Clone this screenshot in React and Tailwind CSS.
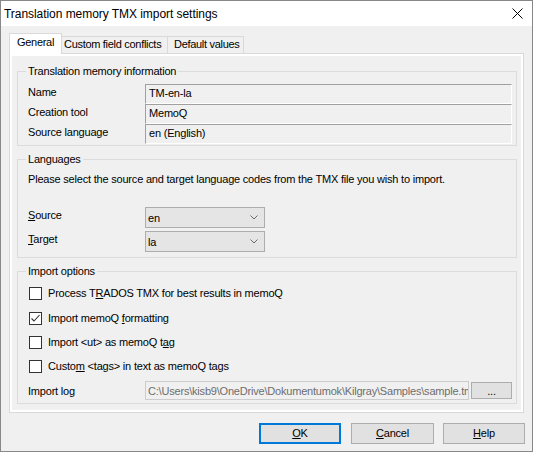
import { useState } from "react";

const font = "font-['Liberation_Sans',Arial,sans-serif]";

const GroupBox = ({ title, className = "", children }) => (
  <fieldset className={`border border-[#dcdcdc] ml-[5px] w-[500px] min-w-0 ${className}`}>
    <legend className="ml-[8px] px-[2px] leading-[13px]">{title}</legend>
    {children}
  </fieldset>
);

const InfoRow = ({ label, value }) => (
  <div className="flex items-start h-[20px]">
    <div className="w-[127px] pl-[10px] leading-[13px] pt-[2px]">{label}</div>
    <div className="w-[367px] h-[20px] border-t border-l border-[#a0a0a0] border-r-white border-b-white border-r border-b pl-[3px] pt-[2px] leading-[13px]">
      {value}
    </div>
  </div>
);

const Combo = ({ value }) => (
  <div className="w-[120px] h-[21px] border border-[#adadad] bg-[#e5e5e5] flex items-center justify-between pl-[2px] pr-[6px]">
    <span className="leading-[13px] pt-[2px]">{value}</span>
    <svg width="8" height="5" viewBox="0 0 8 5">
      <path d="M0.5 0.5 L4 4 L7.5 0.5" fill="none" stroke="#6a6a6a" strokeWidth="1" />
    </svg>
  </div>
);

const Check = ({ checked, onToggle, children }) => (
  <div className="flex items-center h-[13px] cursor-default" onClick={onToggle}>
    <div className="ml-[11px] w-[13px] h-[13px] border border-[#333] bg-white flex items-center justify-center">
      {checked && (
        <svg width="11" height="11" viewBox="0 0 11 11">
          <path d="M1.5 5.5 L4 8 L9.5 2" fill="none" stroke="#333" strokeWidth="1.1" />
        </svg>
      )}
    </div>
    <span className="ml-[6px] leading-[13px]">{children}</span>
  </div>
);

const Btn = ({ children, primary, className = "" }) => (
  <button
    className={`h-[21px] bg-[#e1e1e1] leading-[13px] ${
      primary ? "border-2 border-[#0078d7]" : "border border-[#adadad]"
    } ${className}`}
  >
    {children}
  </button>
);

export default function App() {
  const [opts, setOpts] = useState([false, true, false, false]);
  const toggle = (i) => setOpts(opts.map((v, j) => (j === i ? !v : v)));

  return (
    <div className={`w-[533px] h-[452px] border border-[#888888] bg-[#f0f0f0] flex flex-col text-[11px] tracking-[-0.2px] text-black ${font}`}>
      {/* title bar */}
      <div className="h-[25px] bg-white flex items-center justify-between pl-[3px] pr-[9px]">
        <span className="text-[12px] tracking-[-0.05px]">Translation memory TMX import settings</span>
        <svg width="11" height="11" viewBox="0 0 11 11">
          <path d="M0.5 0.5 L10.5 10.5 M10.5 0.5 L0.5 10.5" stroke="#000" strokeWidth="1" />
        </svg>
      </div>

      <div className="pl-[8px] pt-[8px]">
        {/* tabs */}
        <div className="flex items-end h-[19px] tracking-[-0.3px]">
          <div className="relative z-10 -mb-[1px] w-[53px] h-[21px] bg-white border-t border-l border-r border-[#d9d9d9] pl-[7px] pt-[2px] leading-[13px]">
            General
          </div>
          <div className="w-[106px] h-[17px] border-t border-r border-[#d9d9d9] pl-[2px] pt-[1px] leading-[13px]">
            Custom field conflicts
          </div>
          <div className="w-[76px] h-[17px] border-t border-r border-[#d9d9d9] pl-[6px] pt-[1px] leading-[13px]">
            Default values
          </div>
        </div>

        {/* tab page */}
        <div className="w-[515px] h-[360px] border border-[#d9d9d9] bg-white p-[2px]">
          <div className="h-full bg-[#f0f0f0] pt-[9px]">
            <GroupBox title="Translation memory information" className="pb-[1px]">
              <div className="mt-[6px]">
                <InfoRow label="Name" value="TM-en-la" />
                <InfoRow label="Creation tool" value="MemoQ" />
                <InfoRow label="Source language" value="en (English)" />
              </div>
            </GroupBox>

            <GroupBox title="Languages" className="mt-[7px] pb-[5px]">
              <div className="mt-[7px] pl-[10px] leading-[13px]">
                Please select the source and target language codes from the TMX file you wish to import.
              </div>
              <div className="mt-[21px] flex flex-col gap-[3px]">
                <div className="flex items-start">
                  <div className="w-[127px] pl-[10px] pt-[2px] leading-[13px]">
                    <span className="underline">S</span>ource
                  </div>
                  <Combo value="en" />
                </div>
                <div className="flex items-start">
                  <div className="w-[127px] pl-[10px] pt-[2px] leading-[13px]">
                    <span className="underline">T</span>arget
                  </div>
                  <Combo value="la" />
                </div>
              </div>
            </GroupBox>

            <GroupBox title="Import options" className="mt-[7px] pb-[3px]">
              <div className="mt-[9px] flex flex-col">
                <Check checked={opts[0]} onToggle={() => toggle(0)}>
                  Process T<span className="underline">R</span>ADOS TMX for best results in memoQ
                </Check>
                <div className="mt-[12px]">
                  <Check checked={opts[1]} onToggle={() => toggle(1)}>
                    Import memoQ <span className="underline">f</span>ormatting
                  </Check>
                </div>
                <div className="mt-[11px]">
                  <Check checked={opts[2]} onToggle={() => toggle(2)}>
                    Import &lt;ut&gt; as memoQ t<span className="underline">a</span>g
                  </Check>
                </div>
                <div className="mt-[11px]">
                  <Check checked={opts[3]} onToggle={() => toggle(3)}>
                    Custo<span className="underline">m</span> &lt;tags&gt; in text as memoQ tags
                  </Check>
                </div>
              </div>
              <div className="mt-[8px] flex items-center">
                <div className="w-[127px] pl-[10px] leading-[13px] pt-[1px]">Import log</div>
                <div className="w-[324px] h-[19px] border border-[#cccccc] bg-[#f0f0f0] text-[#6d6d6d] pl-[2px] flex items-center overflow-hidden whitespace-nowrap">
                  <span className="leading-[13px] pt-[1px]">
                    C:\Users\kisb9\OneDrive\Dokumentumok\Kilgray\Samples\sample.tmx
                  </span>
                </div>
                <button className="ml-[2px] w-[41px] h-[17px] bg-[#e1e1e1] border border-[#adadad] leading-[13px] pt-[2px]">
                  ...
                </button>
              </div>
            </GroupBox>
          </div>
        </div>

        {/* bottom buttons */}
        <div className="mt-[10px] flex justify-end pr-[7px]">
          <Btn primary className="w-[82px]">
            <span className="underline">O</span>K
          </Btn>
          <Btn className="w-[83px] ml-[10px]">
            <span className="underline">C</span>ancel
          </Btn>
          <Btn className="w-[82px] ml-[9px]">
            <span className="underline">H</span>elp
          </Btn>
        </div>
      </div>
    </div>
  );
}
